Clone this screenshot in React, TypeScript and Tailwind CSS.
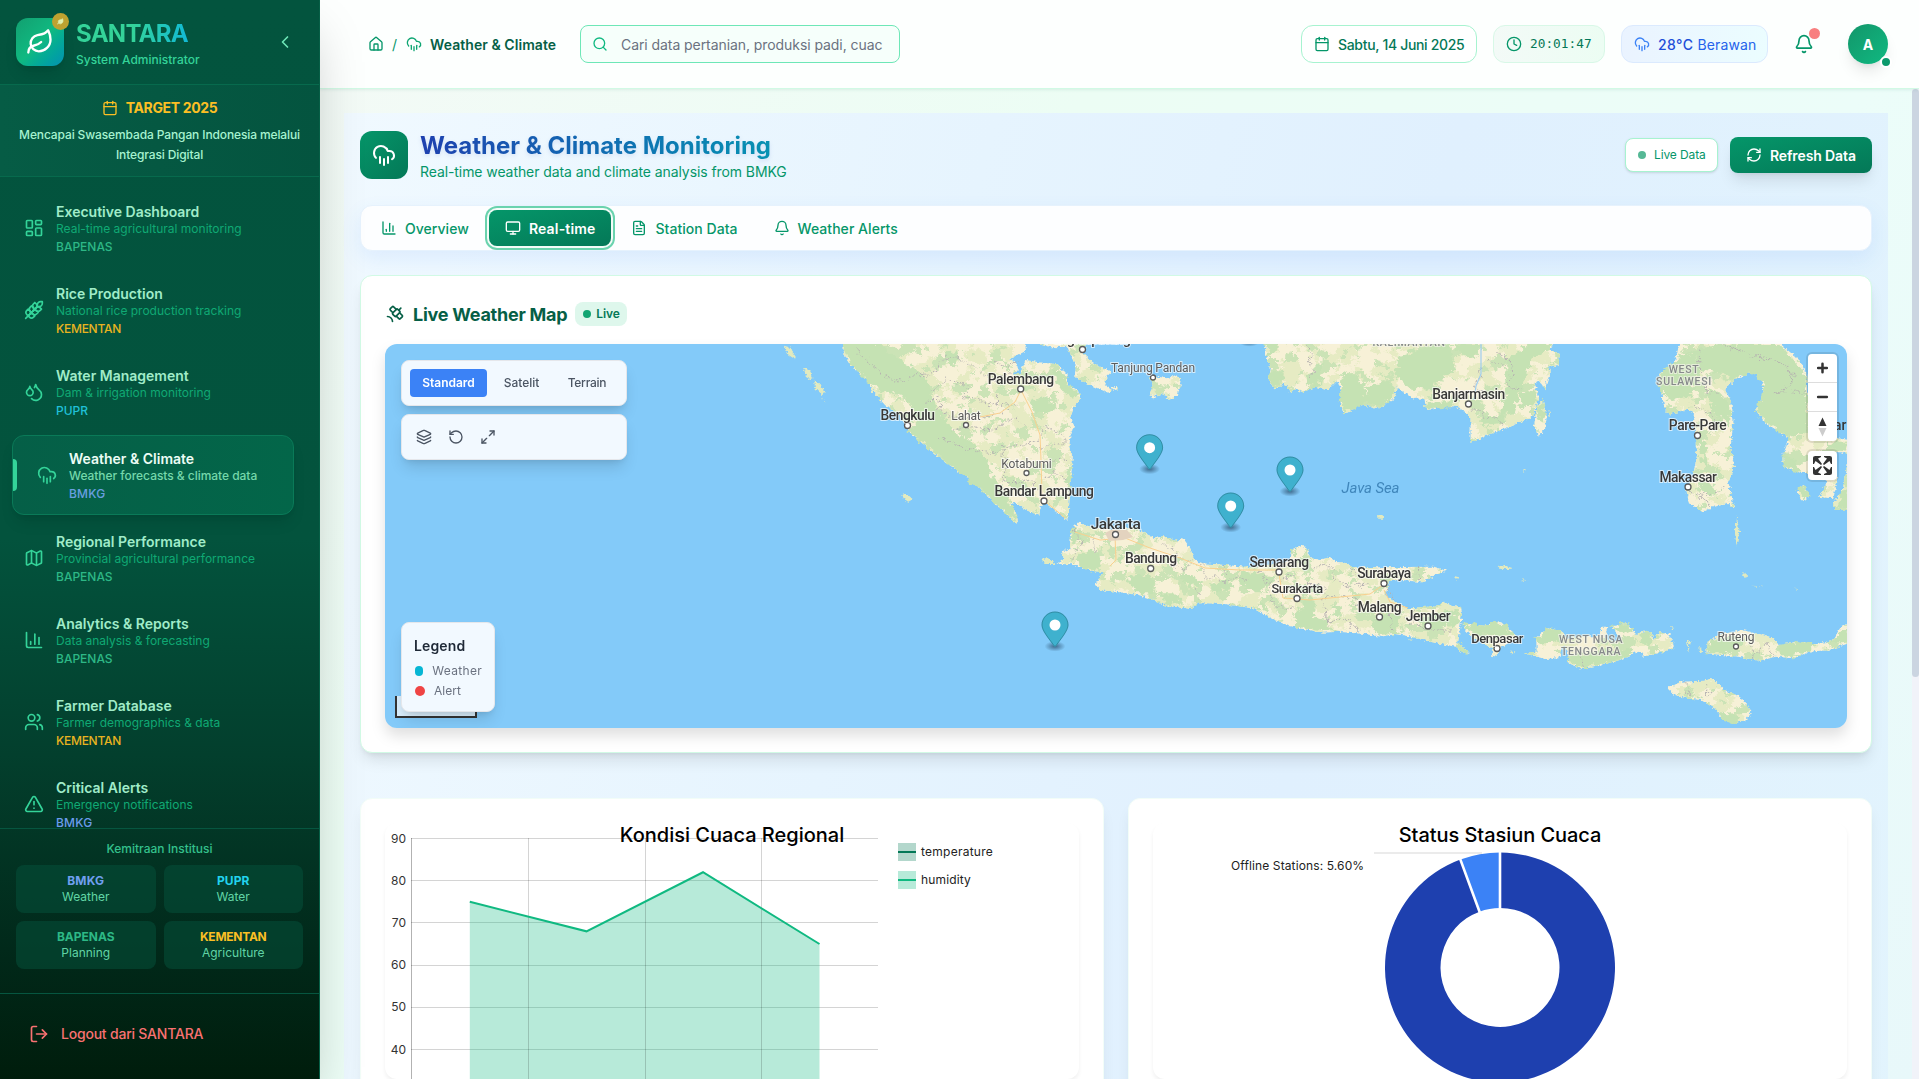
import React from "react";
import {
  Bell, Calendar, ChartColumn, ChevronLeft, Clock, CloudRain, Droplets, FileText, House, Layers, LayoutDashboard,
  Leaf, LogOut, Map as MapIcon, Maximize2, Monitor, RefreshCw, RotateCcw, Satellite, Search, TriangleAlert, Users, Wheat,
} from "lucide-react";

const navItems = [
  { icon: LayoutDashboard, title: "Executive Dashboard", desc: "Real-time agricultural monitoring", tag: "BAPENAS", tone: "text-[#2db886]" },
  { icon: Wheat, title: "Rice Production", desc: "National rice production tracking", tag: "KEMENTAN", tone: "text-[#e9b320] tracking-[-0.022em]" },
  { icon: Droplets, title: "Water Management", desc: "Dam & irrigation monitoring", tag: "PUPR", tone: "text-[#20c0d8]" },
  { icon: CloudRain, title: "Weather & Climate", desc: "Weather forecasts & climate data", tag: "BMKG", tone: "text-[#6a9fe0] tracking-[0.02em]", active: true },
  { icon: MapIcon, title: "Regional Performance", desc: "Provincial agricultural performance", tag: "BAPENAS", tone: "text-[#2db886]" },
  { icon: ChartColumn, title: "Analytics & Reports", desc: "Data analysis & forecasting", tag: "BAPENAS", tone: "text-[#2db886]" },
  { icon: Users, title: "Farmer Database", desc: "Farmer demographics & data", tag: "KEMENTAN", tone: "text-[#e9b320] tracking-[-0.022em]" },
  { icon: TriangleAlert, title: "Critical Alerts", desc: "Emergency notifications", tag: "BMKG", tone: "text-[#6b9cec] tracking-[0.02em]" },
];

const partners = [
  { name: "BMKG", role: "Weather", tone: "text-[#6f9ff0] tracking-[0.02em]" },
  { name: "PUPR", role: "Water", tone: "text-[#22d3ee] tracking-[0.01em]" },
  { name: "BAPENAS", role: "Planning", tone: "text-[#2db886]" },
  { name: "KEMENTAN", role: "Agriculture", tone: "text-[#fbbf24] tracking-[-0.022em]" },
];

function Sidebar() {
  return (
    <aside className="relative z-20 flex h-full w-80 shrink-0 flex-col border-r border-[#065f46] bg-[linear-gradient(180deg,#03543e_0%,#03533d_50%,#033f2d_70%,#01291a_88%,#001d0c_100%)] shadow-[0_25px_50px_-12px_rgba(0,0,0,0.25)]">
      <div className="flex h-[85px] shrink-0 items-center border-b border-[#076a4d] px-4">
        <div className="relative flex size-12 items-center justify-center rounded-xl bg-gradient-to-br from-[#12a070] via-[#10b981] to-[#0891b2] shadow-lg">
          <Leaf size={28} className="text-white" />
          <span className="absolute -right-[5px] -top-[5px] flex size-[17px] items-center justify-center rounded-full bg-[#bfa230]">
            <Leaf size={7} className="fill-[#e5f3b0] text-[#d5e59c]" />
          </span>
        </div>
        <div className="ml-3 flex-1 pt-[2px]">
          <div className="w-fit bg-gradient-to-r from-[#34d399] via-[#34d399] to-[#12b9d4] bg-clip-text text-2xl font-bold leading-[32px] tracking-[-0.03em] text-transparent">SANTARA</div>
          <div className="mt-[2px] text-xs font-medium text-[#34d399]">System Administrator</div>
        </div>
        <ChevronLeft size={20} className="mr-[8px] text-[#6ee7b7]" />
      </div>
      <div className="h-[92px] shrink-0 border-b border-[#076a4d] bg-gradient-to-r from-[#065c45] to-[#04543f] px-4 pt-[13px] text-center">
        <div className="flex items-center justify-center gap-2 text-[#fbbf24]">
          <Calendar size={16} />
          <span className="text-sm font-bold tracking-[-0.025em]">TARGET 2025</span>
        </div>
        <p className="mt-[7px] whitespace-nowrap text-xs font-medium leading-[19.5px] tracking-[-0.01em] text-[#a7f3d0]">
          Mencapai Swasembada Pangan Indonesia melalui<br />Integrasi Digital
        </p>
      </div>
      <nav className="flex min-h-0 flex-1 flex-col gap-1 overflow-hidden px-3 pt-3">
        {navItems.map(({ icon: Icon, title, desc, tag, tone, active }) => (
          <div
            key={title}
            className={
              active
                ? "relative flex h-20 w-[282px] shrink-0 items-center gap-3 rounded-xl border border-[#0a7a58] bg-gradient-to-r from-[#055f47] to-[#036649] pl-6 shadow-lg"
                : "flex h-[78px] shrink-0 items-center gap-3 pl-3"
            }
          >
            {active && <span className="absolute left-0 top-[23px] h-8 w-1 rounded-r-full bg-[#34d399]" />}
            <Icon size={20} className="shrink-0 text-[#34d399]" />
            <div className="whitespace-nowrap pt-[2px]">
              <div className={active ? "text-sm font-semibold leading-[18px] text-[#ecfdf5]" : "text-sm font-semibold leading-[18px] text-[#a0ecc9]"}>{title}</div>
              <div className={active ? "text-xs font-medium tracking-[-0.003em] text-[#75d8ab]" : "text-xs text-[#10a974]"}>{desc}</div>
              <div className={`mt-[2px] text-xs font-medium ${tone}`}>{tag}</div>
            </div>
          </div>
        ))}
      </nav>
      <div className="h-[165px] shrink-0 border-t border-[#065640] px-4 pt-3">
        <div className="text-center text-xs font-medium text-[#34c08c]">Kemitraan Institusi</div>
        <div className="mt-2 grid grid-cols-2 gap-2">
          {partners.map((p) => (
            <div key={p.name} className="rounded-lg bg-[#06513a]/55 p-2 text-center text-xs">
              <div className={`font-bold ${p.tone}`}>{p.name}</div>
              <div className="text-[#6ee7b7]/90">{p.role}</div>
            </div>
          ))}
        </div>
      </div>
      <div className="flex h-[86px] shrink-0 items-center gap-3 border-t border-[#065640] pb-[6px] pl-[29px] text-[#f87171]">
        <LogOut size={20} />
        <span className="text-sm font-medium tracking-[-0.015em]">Logout dari SANTARA</span>
      </div>
    </aside>
  );
}

function Header() {
  return (
    <header className="relative z-10 flex h-[89px] shrink-0 items-center border-b border-[#d1fae5] bg-[#fdfffe] pl-12 pr-[31px] shadow-[0_1px_3px_rgba(16,120,80,0.1)]">
      <div className="flex w-[212px] items-center gap-2 text-sm text-[#059669]">
        <House size={16} />
        <span className="pt-px">/</span>
        <CloudRain size={16} className="ml-px text-[#0ea572]" />
        <span className="whitespace-nowrap pt-[2px] font-semibold tracking-[0.004em] text-[#065f46]">Weather &amp; Climate</span>
      </div>
      <div className="flex h-[38px] w-80 items-center gap-[13px] overflow-hidden rounded-lg border border-[#6ee7b7] bg-[#f6fffb] pl-[11px]">
        <Search size={16} className="shrink-0 text-[#10b981]" />
        <span className="whitespace-nowrap pt-[2px] text-sm tracking-[-0.005em] text-[#6b7280]">Cari data pertanian, produksi padi, cuac</span>
      </div>
      <div className="ml-auto flex items-center">
        <div className="flex h-[38px] w-44 items-center gap-2 whitespace-nowrap rounded-xl border border-[#a7f3d0] bg-white pl-3 text-sm font-medium tracking-[-0.023em] text-[#047857]">
          <Calendar size={16} className="text-[#059669]" /><span className="pt-[2px]">Sabtu, 14 Juni 2025</span>
        </div>
        <div className="ml-4 flex h-[38px] w-28 items-center gap-2 rounded-xl border border-[#d8f8e7] bg-gradient-to-r from-[#f3faf7] to-[#ecfdf3] pl-3 font-['DejaVu_Sans_Mono',monospace] text-[12.8px] text-[#047857]">
          <Clock size={16} className="shrink-0 text-[#059669]" />20:01:47
        </div>
        <div className="ml-4 flex h-[38px] w-[147px] items-center rounded-xl border border-[#dbeafe] bg-gradient-to-r from-[#eaf3ff] to-[#ebfdff] pl-3 text-sm">
          <CloudRain size={16} className="text-[#3b82f6]" />
          <span className="ml-2 pt-[2px] font-medium tracking-[0.03em] text-[#1d4ed8]">28°C</span>
          <span className="ml-1 pt-[2px] tracking-[0.01em] text-[#2563eb]">Berawan</span>
        </div>
        <div className="relative ml-[26px] text-[#059669]">
          <Bell size={20} />
          <span className="absolute -right-[6px] -top-[6px] size-[11px] rounded-full bg-[#f87f7f]" />
        </div>
        <div className="relative ml-[34px] flex size-10 items-center justify-center rounded-full bg-gradient-to-br from-[#12966a] to-[#10b981] pt-px text-sm font-bold text-white shadow-lg">
          A
          <span className="absolute -bottom-[4px] -right-[4px] size-3 rounded-full border-2 border-white bg-[#0c9a6c]" />
        </div>
      </div>
    </header>
  );
}

const tabs = [
  { icon: ChartColumn, label: "Overview" },
  { icon: Monitor, label: "Real-time", active: true },
  { icon: FileText, label: "Station Data" },
  { icon: Bell, label: "Weather Alerts" },
];

/* Coastlines. West group and east group each use their own drawing scale. */
const westLand =
  "M232,38L236,72 255,105 300,150 320,190 350,225 395,260 415,300 450,335 500,380 550,420 600,455 630,490 665,525 700,560 712,578 722,576 716,545 700,525 715,518 745,540 782,557 785,535 795,513 812,530 850,560 858,570 865,540 868,470 876,380 866,350 870,310 882,290 868,265 880,230 898,207 890,180 862,165 858,130 830,103 780,97 745,90 735,110 728,128 708,135 722,118 720,98 700,88 745,62 742,38Z" +
  "M780,38L815,52 862,50 870,75 885,110 880,140 915,160 945,175 975,188 985,180 965,165 970,140 985,125 950,110 930,95 905,70 912,38Z" +
  "M985,170L1000,168 1002,178 988,182Z" +
  "M1090,145L1115,140 1140,145 1165,135 1180,155 1170,195 1145,210 1130,188 1110,198 1098,207 1092,190 1100,165Z" +
  "M895,575L880,590 870,620 868,655 845,665 850,685 830,703 870,702 930,722 960,727 938,765 955,780 1000,785 1060,795 1105,810 1130,825 1205,837 1225,820 1260,820 1300,822 1380,835 1430,865 1480,888 1530,897 1568,898 1568,690 1540,685 1530,652 1510,648 1490,660 1485,690 1440,702 1380,712 1300,705 1240,700 1215,690 1205,655 1185,625 1165,632 1130,618 1105,625 1070,605 1050,590 1000,600 930,592 900,582Z";
const westIslets =
  "M68,47L82,52 100,80 98,88 80,75Z M120,112L140,122 150,145 135,150Z M150,150L165,160 182,185 175,195 155,175Z M398,493L415,495 428,508 415,515 402,505Z M790,690L805,684 828,702 800,702Z M172,200L184,218 178,212Z";
const eastLand =
  "M-90,38L-85,80 -74,115 -79,150 -65,178 -38,160 -25,185 -11,176 7,187 40,170 70,180 95,150 105,185 103,220 110,253 130,240 155,222 195,237 215,222 240,205 245,170 265,190 290,207 315,205 320,240 370,225 400,232 418,245 432,265 432,338 465,320 530,290 590,260 600,215 605,200 595,160 605,152 620,178 635,122 627,110 655,105 658,70 630,60 640,38Z" +
  "M600,225L615,212 625,260 620,300 602,320 594,280Z" +
  "M-10,660L0,648 15,650 25,685 60,690 75,680 90,695 120,700 135,712 200,712 340,710 370,722 340,735 310,757 260,750 225,752 222,775 215,795 235,812 270,834 290,835 320,827 345,830 365,815 380,827 408,832 410,850 405,900 400,940 430,968 410,965 395,950 370,945 330,935 270,917 240,912 205,920 165,912 95,905 60,908 0,895 -10,895Z" +
  "M412,880L470,888 495,875 520,885 550,925 520,945 503,960 497,980 487,978 487,955 440,925 420,900Z" +
  "M598,925L630,895 665,905 675,925 655,985 620,987 570,970 600,965Z" +
  "M665,930L700,920 760,918 765,890 782,890 772,920 790,935 815,930 790,890 830,880 852,915 865,905 890,905 895,930 910,907 935,912 948,955 920,965 870,980 860,962 810,990 760,1005 710,1015 678,1000 680,975Z" +
  "M1030,970L1030,940 1060,915 1120,900 1160,912 1200,925 1215,945 1260,935 1300,945 1350,930 1370,890 1390,878 1390,940 1340,960 1290,965 1250,985 1205,980 1165,992 1110,980Z" +
  "M930,1075L965,1055 1025,1052 1045,1045 1075,1080 1105,1095 1125,1115 1145,1145 1130,1170 1100,1180 1070,1165 1050,1135 1015,1110 980,1105 950,1095Z" +
  "M962,38L950,90 945,115 910,130 915,190 925,240 935,253 985,238 998,250 995,280 1005,320 1005,380 995,440 978,475 985,520 1020,545 1045,530 1085,522 1100,535 1085,460 1100,405 1090,360 1098,270 1092,215 1076,175 1100,150 1145,125 1170,135 1175,200 1153,240 1180,280 1240,325 1225,370 1225,410 1270,428 1300,430 1335,455 1315,500 1350,505 1362,450 1350,395 1360,365 1390,372 1390,330 1330,320 1290,290 1282,130 1265,90 1225,50 1215,38Z" +
  "M1390,380L1380,450 1375,480 1350,520 1355,540 1390,540Z M1262,480L1275,465 1288,495 1280,515 1268,508Z";
const eastIslets =
  "M1105,556L1113,600 1106,650 1101,600Z M198,555L212,555 213,566 198,566Z M500,710L515,706 540,715 528,718 505,716Z M390,738L403,742 400,749Z M560,748L574,750 566,752Z M565,424L571,420 569,427Z M1122,730L1138,738 1125,743Z M1142,767L1172,769 1160,770Z M530,960L543,968 538,973Z M940,888L948,893 942,900Z M980,930L990,935 984,965Z M1008,950L1018,960 1014,970Z M1254,776L1261,777 1258,782Z M275,928L288,930 280,932Z M630,240L636,245 631,262Z";

const westGreen =
  "M232,38L340,38 360,70 400,95 440,120 470,150 480,200 500,240 540,300 600,340 640,400 650,440 680,480 700,520 722,576 700,560 630,490 550,420 450,335 415,300 440,290 430,240 400,200 340,180 300,150 255,105Z" +
  "M520,70L550,60 560,90 530,110Z M760,210L800,200 830,230 800,250 765,240Z M860,420L875,400 870,470 850,460Z M820,120L850,130 855,160 895,190 880,205 840,180Z" +
  "M880,690L900,665 940,665 960,690 940,725 900,710Z M1030,740L1090,735 1110,760 1100,790 1050,790Z M1170,735L1210,735 1240,760 1200,770Z M870,600L895,595 900,630 875,640Z M1340,730L1390,725 1430,745 1400,790 1340,760Z M1260,760L1310,750 1330,770 1270,790Z M1000,670L1020,680 1010,700Z M1490,665L1520,655 1520,680 1495,680Z M1400,810L1430,850 1400,835Z M1120,790L1160,790 1190,825 1140,822Z M1420,735L1440,740 1440,765 1415,760Z";
const eastGreen =
  "M110,120L165,160 170,210 130,240 110,250 103,200Z M245,80L320,50 380,42 390,120 330,180 270,170 245,140Z M520,90L560,60 570,38 640,38 630,60 590,80 560,180 540,250 500,260 520,200Z M560,190L600,180 595,220 560,240Z M600,225L615,212 625,260 605,275Z M465,255L520,255 510,280 460,285Z" +
  "M-85,42L-55,42 -60,70 -80,80Z M-75,125L-45,120 -50,165 -70,170Z M20,130L60,95 50,170 20,165Z M170,170L235,150 240,195 205,230 170,215Z M320,220L390,210 395,230 325,238Z M380,42L460,42 440,90 400,60Z" +
  "M1000,60L1070,42 1130,80 1210,90 1250,160 1285,190 1285,300 1240,325 1180,280 1153,240 1175,200 1170,135 1145,125 1100,145 1060,130 1010,120Z M950,90L1000,60 1010,130 990,200 940,210 915,190 912,130Z M1010,320L1025,340 1030,410 1018,400Z M1040,170L1090,220 1090,290 1050,250 1030,190Z M1010,450L1050,460 1050,500 1020,490Z M1060,42L1215,42 1280,130 1280,250 1200,200 1120,90Z" +
  "M180,880L200,850 260,850 240,912 200,915Z M290,870L330,850 400,840 400,880 340,900Z M-10,890L-10,850 20,800 45,810 30,860 60,870 95,905Z M410,965L400,945 430,968Z M80,830L110,825 105,855 85,850Z" +
  "M412,880L470,888 495,875 520,885 540,915 440,915Z M598,925L630,895 665,905 665,925 640,940 605,945Z M675,990L700,970 790,960 850,960 810,990 710,1015Z M790,890L830,880 845,905 820,915Z M860,905L890,905 885,950 860,940Z M1030,970L1035,930 1110,920 1130,930 1080,970Z M1215,945L1260,935 1300,945 1290,960 1240,985 1215,975Z M1340,940L1390,890 1390,935Z M995,1095L1020,1100 1020,1112Z M1055,1145L1080,1150 1110,1160 1100,1180 1070,1165Z M1225,370L1250,390 1270,428 1225,410Z M1330,335L1386,340 1386,365 1350,360Z M1262,480L1275,465 1288,495 1280,515Z M1375,480L1390,470 1390,540 1360,530Z";

const westBorders =
  "M270,60L310,100 350,140 400,155 430,135 490,130 500,95 545,80 600,110 620,130 660,150 700,130 M480,180L520,150 590,170 570,200 600,210 640,220 700,225 M460,220L500,200 500,240 540,265 600,260 660,255 720,220 M640,90L690,110 720,90 M665,190L665,225 M540,300L600,290 650,300 700,270 720,265 740,290 M500,320L560,350 600,360 660,370 680,350 740,345 780,330 800,290 840,310 865,340 M680,360L690,400 680,450 720,460 760,450 770,480 M785,350L860,335 M790,395L860,385 M800,440L830,430 860,450 M880,600L900,640 870,690 M935,630L940,665 M1130,640L1170,670 1150,700 1190,720 1210,690 M1240,705L1240,750 1280,740 1300,760 1330,740 1370,750 M1220,770L1230,810 M1300,710L1310,740 M1420,760L1440,830 1500,840 M1400,720L1420,760 1480,740 1540,730";
const eastBorders =
  "M20,42L30,120 30,150 M460,120L440,170 480,200 M500,70L530,90 540,130 520,170 560,180 M480,90L520,110 M430,240L460,240 465,265 500,260 515,290 M1070,42L1110,60 1150,80 1210,90 1250,130 1240,170 1200,190 1280,185 M1010,60L1015,130 1030,180 1050,190 M990,220L1040,250 1060,300 M985,490L1020,500 1040,530 M1010,500L1080,480 M30,710L80,710 90,750 130,770 180,760 M20,760L60,770 60,800 130,800 160,830 M135,715L140,740 M60,820L70,880 120,870 150,905 M230,850L235,905 M290,840L280,880 330,900 390,900 M300,715L300,752 M710,960L715,1012 M980,1060L985,1100 M1030,1060L1030,1100 M1140,930L1150,980 1180,940 1200,980 M240,800L215,770 M265,860L300,870";

const cities: { n: string; x: number; y: number; dx?: number; s?: number; small?: boolean }[] = [
  { n: "Palembang", x: 1020.7, y: 389 }, { n: "Bengkulu", x: 907.5, y: 425.5 }, { n: "Lahat", x: 966, y: 425, small: true },
  { n: "Kotabumi", x: 1026.5, y: 473, small: true }, { n: "Bandar Lampung", x: 1044, y: 501 }, { n: "Jakarta", x: 1115.5, y: 534.5, s: 15.5 },
  { n: "Bandung", x: 1150.7, y: 568.5 }, { n: "Tanjung Pandan", x: 1153, y: 377.5, small: true }, { n: "Pangkalpinang", x: 1082.5, y: 349.5, dx: 5 },
  { n: "Semarang", x: 1279, y: 572 }, { n: "Surakarta", x: 1297, y: 598.5, s: 12.7 }, { n: "Surabaya", x: 1384, y: 583.5 },
  { n: "Malang", x: 1379.5, y: 617 }, { n: "Jember", x: 1428, y: 626 }, { n: "Denpasar", x: 1497, y: 648.5, s: 13 },
  { n: "Banjarmasin", x: 1468.5, y: 404 }, { n: "Pare-Pare", x: 1697.5, y: 435.5 }, { n: "Makassar", x: 1688, y: 487 },
  { n: "Ruteng", x: 1736, y: 646.5, small: true },
];

const regions = [
  { n: "KALIMANTAN", x: 1409, y: 346 }, { n: "WEST", x: 1684, y: 373 }, { n: "SULAWESI", x: 1684, y: 385 },
  { n: "WEST NUSA", x: 1591, y: 643 }, { n: "TENGGARA", x: 1591, y: 655 },
];

const pins = [[1149.6, 447.7], [1290, 470], [1230.7, 506], [1055, 625]];

function Terrain({ land, islets, green, borders, transform }: { land: string; islets: string; green: string; borders: string; transform: string }) {
  return (
    <g transform={transform}>
      <g filter="url(#coast)">
        <path d={land} fill="#f7f1d7" />
        <path d={land} fill="#000" filter="url(#patches)" />
        <path d={land} fill="#000" filter="url(#woods)" />
        <path d={islets} fill="#e2eabf" />
      </g>
      <g filter="url(#rough)">
        <path d={green} fill="#c5e2b3" />
      </g>
      <path d={borders} fill="none" stroke="#b4b0b0" strokeWidth="2.8" strokeDasharray="7 4" filter="url(#rough)" />
    </g>
  );
}

function WeatherMap() {
  return (
    <svg viewBox="385 344 1462 384" className="block h-[384px] w-full" fontFamily="Roboto, sans-serif">
      <defs>
        <filter id="coast" x="-2%" y="-2%" width="104%" height="104%" colorInterpolationFilters="sRGB">
          <feTurbulence type="fractalNoise" baseFrequency="0.12" numOctaves="3" seed="4" result="n" />
          <feDisplacementMap in="SourceGraphic" in2="n" scale="14" xChannelSelector="R" yChannelSelector="G" />
        </filter>
        <filter id="rough" x="-2%" y="-2%" width="104%" height="104%" colorInterpolationFilters="sRGB">
          <feTurbulence type="fractalNoise" baseFrequency="0.06" numOctaves="4" seed="9" result="n" />
          <feDisplacementMap in="SourceGraphic" in2="n" scale="30" xChannelSelector="R" yChannelSelector="G" />
        </filter>
        <filter id="patches" x="0" y="0" width="100%" height="100%" colorInterpolationFilters="sRGB">
          <feTurbulence type="fractalNoise" baseFrequency="0.02" numOctaves="5" seed="12" />
          <feColorMatrix values="0 0 0 0 0.902  0 0 0 0 0.922  0 0 0 0 0.765  30 0 0 0 -15.2" />
          <feComposite in2="SourceGraphic" operator="in" />
        </filter>
        <filter id="woods" x="0" y="0" width="100%" height="100%" colorInterpolationFilters="sRGB">
          <feTurbulence type="fractalNoise" baseFrequency="0.025" numOctaves="5" seed="31" />
          <feColorMatrix values="0 0 0 0 0.796  0 0 0 0 0.89  0 0 0 0 0.714  0 30 0 0 -17.4" />
          <feComposite in2="SourceGraphic" operator="in" />
        </filter>
        <radialGradient id="pinShadow">
          <stop offset="0.1" stopColor="#1c3a55" stopOpacity="0.6" />
          <stop offset="1" stopColor="#1c3a55" stopOpacity="0" />
        </radialGradient>
      </defs>
      <rect x="385" y="344" width="1462" height="384" fill="#83caf9" />
      <Terrain land={westLand} islets={westIslets} green={westGreen} borders={westBorders} transform="translate(760 330) scale(0.35714 0.33333)" />
      <Terrain land={eastLand} islets={eastIslets} green={eastGreen} borders={eastBorders} transform="translate(1300 330) scale(0.3948 0.33333)" />
      <g fill="none" stroke="#f9d08f" strokeWidth="1">
        <path d="M1020 392L1015 402 1000 413 980 417M1022 392L1032 412 1040 435 1041 460 1042 495M1046 502L1058 512 1065 518M1075 532L1100 540 1125 538 1150 548 1180 558 1205 568 1240 570 1279 570M1115 536L1116 560 1110 566M1279 574L1283 598 1310 600 1340 597 1370 594 1383 585M1384 590L1390 602 1408 608" />
      </g>
      <path d="M1105 533l8-4 14 1 6 7-10 3-14 1z" fill="#e3d3bf" />
      <path d="M1481 344v30l-5 12-2 14" fill="none" stroke="#9fcdf0" strokeWidth="1.2" />
      {regions.map((r) => (
        <text key={r.n} x={r.x} y={r.y} textAnchor="middle" fontSize="10.5" fontWeight="500" letterSpacing="0.7" fill="#85898a" stroke="#f4f4ea" strokeWidth="2" strokeOpacity="0.7" paintOrder="stroke">{r.n}</text>
      ))}
      {cities.map((c) => (
        <g key={c.n}>
          <circle cx={c.x} cy={c.y} r={c.small ? 2.5 : 3} fill="#fff" stroke="#5a5a5a" strokeWidth="1.3" />
          <text
            x={c.x + (c.dx ?? 0)} y={c.y - (c.s === 15.5 ? 5.5 : 5.5)} textAnchor="middle" fontSize={c.s ?? (c.small ? 12 : 13.8)} fontWeight={c.small ? 400 : 500}
            letterSpacing={c.small ? -0.15 : -0.45} fill={c.small ? "#5c5c5c" : "#383838"} stroke="#fff" strokeWidth="2" strokeOpacity="0.65" paintOrder="stroke"
          >{c.n}</text>
        </g>
      ))}
      <text x="1834" y="430" fontSize="13.8" fontWeight="500" fill="#383838">ar</text>
      <text x="1370.5" y="493" textAnchor="middle" fontSize="15" letterSpacing="-0.1" fontStyle="italic" fill="#3f86bb">Java Sea</text>
      <ellipse cx="1249.3" cy="341.5" rx="10.5" ry="5.2" fill="url(#pinShadow)" />
      {pins.map(([x, y]) => (
        <g key={x} transform={`translate(${x - 13.5} ${y - 13.5})`}>
          <ellipse cx="13.5" cy="34.8" rx="10.5" ry="5.25" fill="url(#pinShadow)" />
          <path d="M27,13.5C27,19.07 20.25,27 14.75,34.5C14.02,35.5 12.98,35.5 12.25,34.5C6.75,27 0,19.22 0,13.5C0,6.04 6.04,0 13.5,0C20.96,0 27,6.04 27,13.5Z" fill="#3FB1CE" />
          <path d="M26.5,13.5C26.5,19 19.8,26.8 14.35,34.2C13.9,34.9 13.1,34.9 12.65,34.2C7.2,26.8 .5,19 .5,13.5C.5,6.3 6.3,.5 13.5,.5C20.7,.5 26.5,6.3 26.5,13.5Z" fill="none" stroke="#000" strokeOpacity="0.2" />
          <circle cx="13.5" cy="13.5" r="5.5" fill="#fff" />
        </g>
      ))}
    </svg>
  );
}

function MapPanel() {
  const panel = "rounded-lg border border-[#e5e7eb] bg-[#f2f9ff] shadow-[0_10px_15px_-3px_rgba(0,0,0,0.13),0_4px_6px_-4px_rgba(0,0,0,0.12)]";
  return (
    <div className="relative mt-[18px] overflow-hidden rounded-xl">
      <WeatherMap />
      <div className="absolute left-[10px] top-[352px] h-[22px] w-[82px] border-2 border-t-0 border-[#333] bg-white/70" />
      <div className="absolute left-4 top-4 flex flex-col gap-2">
        <div className={`flex h-[46px] gap-1 p-2 text-xs font-medium text-[#4b5563] ${panel}`}>
          <span className="flex w-[77px] items-center justify-center rounded bg-[#3b82f6] font-semibold text-white">Standard</span>
          <span className="flex w-[61px] items-center justify-center">Satelit</span>
          <span className="flex w-[62px] items-center justify-center tracking-[-0.02em]">Terrain</span>
        </div>
        <div className={`flex h-[46px] items-center gap-4 px-[14px] text-[#4b5563] ${panel}`}>
          <Layers size={16} /><RotateCcw size={16} /><Maximize2 size={16} />
        </div>
      </div>
      <div className={`absolute left-4 top-[278px] h-[90px] w-[94px] p-3 pt-[13px] ${panel}`}>
        <div className="text-sm font-semibold tracking-[0.01em] text-[#1f2937]">Legend</div>
        <div className="mt-[7px] flex items-center gap-[9px] pl-px text-xs tracking-[0.025em] text-[#6b7280]"><span className="size-[10px] rounded-full bg-[#06b6d4]" />Weather</div>
        <div className="mt-1 flex items-center gap-[9px] pl-px text-xs text-[#6b7280]"><span className="size-[10px] rounded-full bg-[#ef4444]" />Alert</div>
      </div>
      <div className="absolute right-[10px] top-[10px] flex flex-col gap-[10px]">
        <div className="flex w-[29px] flex-col divide-y divide-[#ddd] rounded bg-white shadow-[0_0_0_2px_rgba(0,0,0,0.1)]">
          <svg viewBox="0 0 29 29" className="size-[29px]"><path d="M14.5 10v9M10 14.5h9" stroke="#333" strokeWidth="2.6" strokeLinecap="round" /></svg>
          <svg viewBox="0 0 29 29" className="size-[29px]"><path d="M10 14.5h9" stroke="#333" strokeWidth="2.6" strokeLinecap="round" /></svg>
          <svg viewBox="0 0 29 29" className="size-[29px]"><path d="M10.5 14l4-8.5 4 8.5z" fill="#333" /><path d="M10.5 16l4 8.5 4-8.5z" fill="#ccc" /></svg>
        </div>
        <div className="size-[29px] rounded bg-white shadow-[0_0_0_2px_rgba(0,0,0,0.1)]">
          <svg viewBox="0 0 29 29" className="size-[29px]" fill="#333">
            <path d="M24 16v5.5c0 1.75-.75 2.5-2.5 2.5H16v-1l3-1.5-4-5.5 1-1 5.5 4 1.5-3h1zM6 16l1.5 3 5.5-4 1 1-4 5.5 3 1.5v1H7.5C5.75 24 5 23.25 5 21.5V16h1zm7-11v1l-3 1.5 4 5.5-1 1-5.5-4L6 13H5V7.5C5 5.75 5.75 5 7.5 5H13zm11 2.5c0-1.75-.75-2.5-2.5-2.5H16v1l3 1.5-4 5.5 1 1 5.5-4 1.5 3h1V7.5z" />
          </svg>
        </div>
      </div>
    </div>
  );
}

function RegionalChart() {
  const y = (v: number) => 838.5 + (90 - v) * 4.22;
  const pts = [[469.8, 75], [586.5, 68], [703, 82], [819.5, 65]].map(([x, v]) => `${x},${y(v)}`).join(" ");
  return (
    <svg viewBox="385 823 694 256" className="block h-[256px] w-[694px]" fontFamily="Inter, sans-serif" fontSize="12">
      {[90, 80, 70, 60, 50, 40].map((v) => (
        <g key={v}>
          <path d={`M411 ${Math.floor(y(v)) + 0.5}H878`} stroke="#000" strokeOpacity="0.17" />
          <text x="406" y={y(v) + 4} textAnchor="end" fill="#333">{v}</text>
        </g>
      ))}
      <polygon points={`469.8,1079 ${pts} 819.5,1079`} fill="#10b981" fillOpacity="0.3" />
      {[528.5, 645.5, 761.5].map((x) => <path key={x} d={`M${x} 838V1079`} stroke="#000" strokeOpacity="0.17" />)}
      <path d="M411.5 838V1079" stroke="#000" strokeOpacity="0.3" />
      <polyline points={pts} fill="none" stroke="#10b981" strokeWidth="2" />
      <rect x="898" y="843" width="18" height="18" fill="#b3d7cc" />
      <path d="M898 852h18" stroke="#047857" strokeWidth="2" />
      <rect x="898" y="871" width="18" height="18" fill="#b7ead9" />
      <path d="M898 880h18" stroke="#10b981" strokeWidth="2" />
      <text x="921" y="856" fill="#222" letterSpacing="0.25">temperature</text>
      <text x="921" y="884" fill="#222" letterSpacing="0.15">humidity</text>
      <text x="732" y="841.5" textAnchor="middle" fontSize="20" fontWeight="500" fill="#000">Kondisi Cuaca Regional</text>
    </svg>
  );
}

function StationChart() {
  const a = (5.6 / 100) * 2 * Math.PI;
  const cx = 1500, cy = 967.5, R = 115, r = 59.5;
  const at = (rad: number) => `${cx - rad * Math.sin(a)},${cy - rad * Math.cos(a)}`;
  return (
    <svg viewBox="1153 823 694 256" className="block h-[256px] w-[694px]" fontFamily="Inter, sans-serif" fontSize="12">
      <path d="M1374 853H1482" stroke="#e5e5e5" strokeWidth="1.6" />
      <path d={`M${cx},${cy - R}A${R},${R} 0 1 1 ${at(R)}L${at(r)}A${r},${r} 0 1 0 ${cx},${cy - r}Z`} fill="#1e40af" />
      <path d={`M${at(R)}A${R},${R} 0 0 1 ${cx},${cy - R}V${cy - r}A${r},${r} 0 0 0 ${at(r)}Z`} fill="#3b82f6" />
      <path d={`M${at(R + 2)}L${at(r - 2)}M${cx},${cy - R - 2}V${cy - r + 2}`} stroke="#fff" strokeWidth="2.6" />
      <text x="1231" y="869.5" fill="#222" letterSpacing="0.12">Offline Stations: 5.60%</text>
      <text x="1500" y="841.5" textAnchor="middle" fontSize="20" letterSpacing="-0.05" fontWeight="500" fill="#000">Status Stasiun Cuaca</text>
    </svg>
  );
}

function WeatherPage() {
  const chartCard = "h-[400px] w-[744px] rounded-xl border border-[#f2fdf8] bg-white px-6 pt-6 shadow-[0_10px_15px_-3px_rgba(0,0,0,0.08)]";
  const plot = "rounded-xl bg-white shadow-[0_3px_4px_rgba(0,0,0,0.06)]";
  return (
    <section className="h-[1200px] w-[1544px] bg-[linear-gradient(105deg,#f0f9ff_0%,#e6f4fe_35%,#e0f0fe_60%,#e2f4fd_100%)] px-4 pt-[18px]">
      <div className="flex h-12 items-center">
        <div className="flex size-12 items-center justify-center rounded-xl bg-gradient-to-br from-[#059669] to-[#047857] text-white">
          <CloudRain size={24} />
        </div>
        <div className="ml-3 pt-[2px]">
          <h1 className="w-fit bg-gradient-to-r from-[#1e40af] to-[#0891b2] bg-clip-text text-2xl font-bold leading-[32px] text-transparent drop-shadow-[0_2px_2px_rgba(30,64,175,0.12)]">Weather &amp; Climate Monitoring</h1>
          <p className="text-sm tracking-[-0.006em] text-[#059669]">Real-time weather data and climate analysis from BMKG</p>
        </div>
        <div className="ml-auto flex h-[34px] w-[93px] items-center gap-2 whitespace-nowrap rounded-lg border border-[#a7f3d0] bg-white pl-3 text-xs tracking-[-0.01em] text-[#059669] shadow-sm">
          <span className="size-2 rounded-full bg-[#55b895]" />Live Data
        </div>
        <div className="ml-3 flex h-9 w-[142px] items-center gap-2 whitespace-nowrap rounded-lg bg-gradient-to-br from-[#059669] to-[#047857] pl-4 text-sm font-semibold tracking-[-0.008em] text-white shadow-lg">
          <RefreshCw size={16} /><span className="pt-[2px]">Refresh Data</span>
        </div>
      </div>
      <div className="mt-[26px] flex h-[46px] gap-1 rounded-xl border border-[#e6f2fd] bg-[#fdfeff] p-1 shadow-[0_8px_20px_rgba(59,130,246,0.1)]">
        {tabs.map(({ icon: Icon, label, active }) => (
          <div
            key={label}
            className={
              active
                ? "flex h-9 items-center gap-2 rounded-lg bg-gradient-to-br from-[#059669] to-[#047857] px-4 text-sm font-semibold tracking-[0.012em] text-white ring-2 ring-[#6ad3ae] ring-offset-2 ring-offset-[#f3fcf8]"
                : "flex h-9 items-center gap-2 rounded-lg px-4 text-sm font-medium tracking-[0.003em] text-[#059669]"
            }
          >
            <Icon size={16} /><span className="pt-[2px]">{label}</span>
          </div>
        ))}
      </div>
      <div className="mt-6 h-[478px] rounded-xl border border-[#d1fae5] bg-white px-6 pt-[26px] shadow-[0_10px_15px_-3px_rgba(0,0,0,0.1),0_4px_6px_-4px_rgba(0,0,0,0.1)]">
        <div className="flex h-6 items-center">
          <Satellite size={20} className="text-[#065f46]" />
          <h2 className="ml-2 pt-[2px] text-lg font-bold tracking-[-0.014em] text-[#065f46]">Live Weather Map</h2>
          <span className="ml-2 flex h-6 w-[52px] items-center gap-[5px] rounded-lg bg-[#def7ec] pl-2 text-xs font-semibold tracking-[-0.01em] text-[#047857]">
            <span className="size-2 rounded-full bg-[#12a572]" />Live
          </span>
        </div>
        <div className="rounded-xl [filter:drop-shadow(0_8px_7px_rgba(0,0,0,0.12))]"><MapPanel /></div>
      </div>
      <div className="mt-[45px] flex gap-6">
        <div className={chartCard}><div className={plot}><RegionalChart /></div></div>
        <div className={chartCard}><div className={plot}><StationChart /></div></div>
      </div>
    </section>
  );
}

export default function App() {
  return (
    <div className="flex h-[1079px] w-[1919px] overflow-hidden font-['Inter','Liberation_Sans',sans-serif]">
      <Sidebar />
      <div className="flex min-w-0 flex-1 flex-col">
        <Header />
        <div className="flex min-h-0 flex-1">
          <main className="flex-1 overflow-hidden bg-[linear-gradient(135deg,#f3faf6_0%,#ecfdf4_30%,#ecfdf9_60%,#e8f8fa_100%)] pl-6 pt-6">
            <WeatherPage />
          </main>
          <div className="w-[7px] bg-[#f1f3f9]">
            <div className="h-[588px] rounded bg-[#cbd5e1]" />
          </div>
        </div>
      </div>
    </div>
  );
}
